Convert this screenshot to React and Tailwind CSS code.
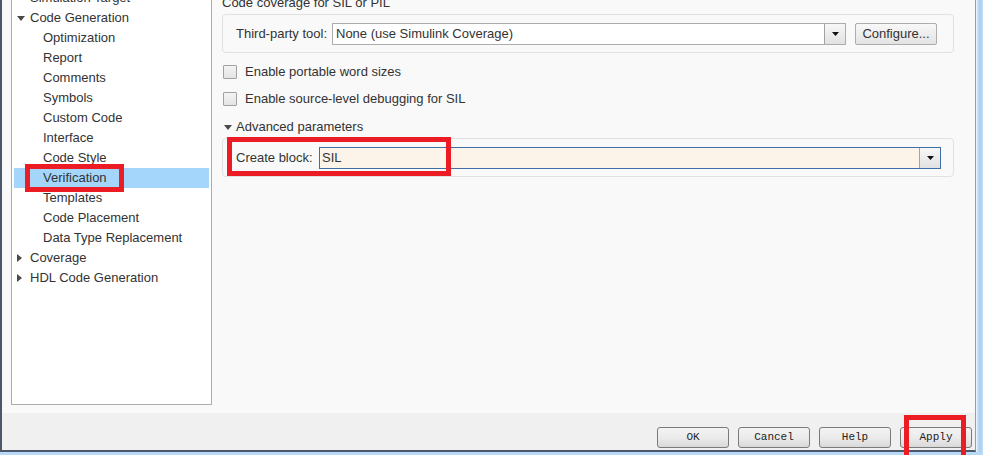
const tree = [
  { label: 'Simulation Target', level: 1 },
  { label: 'Code Generation', level: 1, open: true },
  { label: 'Optimization', level: 2 },
  { label: 'Report', level: 2 },
  { label: 'Comments', level: 2 },
  { label: 'Symbols', level: 2 },
  { label: 'Custom Code', level: 2 },
  { label: 'Interface', level: 2 },
  { label: 'Code Style', level: 2 },
  { label: 'Verification', level: 2, selected: true },
  { label: 'Templates', level: 2 },
  { label: 'Code Placement', level: 2 },
  { label: 'Data Type Replacement', level: 2 },
  { label: 'Coverage', level: 1, closed: true },
  { label: 'HDL Code Generation', level: 1, closed: true },
];

function DownTri() {
  return (
    <svg width="8" height="5" viewBox="0 0 8 5">
      <path d="M0 0 L8 0 L4 5 Z" fill="#4a4a4a" />
    </svg>
  );
}

function RightTri() {
  return (
    <svg width="5" height="8" viewBox="0 0 5 8">
      <path d="M0 0 L5 4 L0 8 Z" fill="#4a4a4a" />
    </svg>
  );
}

function ArrowBtn() {
  return (
    <div className="w-[21px] h-full border-l border-[#a3a3a3] bg-gradient-to-b from-[#f7f7f7] to-[#e2e2e2] flex items-center justify-center">
      <svg width="7" height="4" viewBox="0 0 7 4">
        <path d="M0 0 L7 0 L3.5 4 Z" fill="#111" />
      </svg>
    </div>
  );
}

function Checkbox({ label }) {
  return (
    <div className="h-5 flex items-center">
      <div className="ml-[1px] w-[14px] h-[14px] border border-[#a2a2a2] rounded-[1px] bg-gradient-to-b from-[#f4f4f4] to-[#e4e4e4]" />
      <span className="ml-[8px]">{label}</span>
    </div>
  );
}

function WinButton({ children }) {
  return (
    <div className="w-[72px] h-[21px] border border-[#7a7a7a] rounded-[3px] bg-gradient-to-b from-[#f3f3f3] via-[#ebebeb] to-[#d9d9d9] flex items-center justify-center text-[11px] text-[#222] [font-family:'Liberation_Mono',monospace]">
      {children}
    </div>
  );
}

export default function App() {
  return (
    <div className="relative w-[983px] h-[455px] overflow-hidden flex flex-col bg-[#b9d9f5] text-[13px] text-[#333] [font-family:'Liberation_Sans',Arial,sans-serif]">
      <div className="flex flex-1 min-h-0">
        <div className="flex-1 flex flex-col border-l-2 border-l-[#4b5869] border-b-2 border-b-[#4b5869] border-r border-r-[#9c9c9c]">
          <div className="flex flex-1 min-h-0 bg-[#f9f9f9]">
            {/* tree */}
            <div className="ml-[9px] mb-[8px] w-[201px] border border-t-0 border-[#acacac] bg-white overflow-hidden">
              <div className="-mt-[12px]">
                {tree.map((t) => (
                  <div
                    key={t.label}
                    className={`mx-[2px] h-5 flex items-center whitespace-nowrap ${t.selected ? 'bg-[#a4d6fc]' : ''} ${t.level === 1 ? 'pl-[3px]' : 'pl-[29px]'}`}
                  >
                    {t.level === 1 && (
                      <span className="w-[13px] flex items-center">
                        {t.open && <DownTri />}
                        {t.closed && <RightTri />}
                      </span>
                    )}
                    <span>{t.label}</span>
                  </div>
                ))}
              </div>
            </div>

            {/* settings */}
            <div className="flex-1 pl-[10px]">
              <div className="-mt-[7px] h-5 flex items-center">Code coverage for SIL or PIL</div>
              <div className="mt-[1px] w-[732px] border border-[#e1e1e1] rounded-[4px] pl-[13px] pt-[8px] pb-[7px] flex">
                <div className="w-[96px] h-[22px] flex items-center">Third-party tool:</div>
                <div className="w-[514px] h-[22px] border border-[#acacac] bg-white flex">
                  <div className="flex-1 pl-[3px] flex items-center">None (use Simulink Coverage)</div>
                  <ArrowBtn />
                </div>
                <div className="ml-[9px] w-[82px] h-[22px] border border-[#acacac] rounded-[2px] bg-gradient-to-b from-[#f8f8f8] to-[#e3e3e3] flex items-center justify-center">
                  Configure...
                </div>
              </div>

              <div className="mt-[9px]">
                <Checkbox label="Enable portable word sizes" />
              </div>
              <div className="mt-[7px]">
                <Checkbox label="Enable source-level debugging for SIL" />
              </div>

              <div className="mt-[8px] h-5 flex items-center">
                <span className="ml-[2px] w-[12px] flex items-center">
                  <DownTri />
                </span>
                <span>Advanced parameters</span>
              </div>

              <div className="mt-[1px] w-[732px] border border-[#e1e1e1] rounded-[4px] pl-[13px] pr-[12px] pt-[8px] pb-[7px] flex">
                <div className="w-[83px] h-[22px] flex items-center">Create block:</div>
                <div className="flex-1 h-[22px] border border-[#3d6ea6] bg-[#fcf3e9] flex">
                  <div className="flex-1 pl-[2px] flex items-center">SIL</div>
                  <ArrowBtn />
                </div>
              </div>
            </div>
          </div>

          <div className="h-[37px] bg-[#f0f0f0] flex justify-end items-start pt-[14px] pr-[3px] gap-[9px]">
            <WinButton>OK</WinButton>
            <WinButton>Cancel</WinButton>
            <WinButton>Help</WinButton>
            <WinButton>Apply</WinButton>
          </div>
        </div>
        <div className="w-[7px] border-l border-[#e8f3fc] bg-gradient-to-r from-[#cfe6fa] via-[#a9cdee] to-[#c4e0f8]" />
      </div>
      <div className="h-[3px] bg-[#b7d8f6]" />

      {/* annotation boxes */}
      <div className="absolute left-[25px] top-[164px] w-[99px] h-[28px] border-[5px] border-[#ec1c24]" />
      <div className="absolute left-[227px] top-[137px] w-[224px] h-[39px] border-[5px] border-[#ec1c24]" />
      <div className="absolute left-[904px] top-[415px] w-[62px] h-[45px] border-[5px] border-[#ec1c24]" />
    </div>
  );
}
